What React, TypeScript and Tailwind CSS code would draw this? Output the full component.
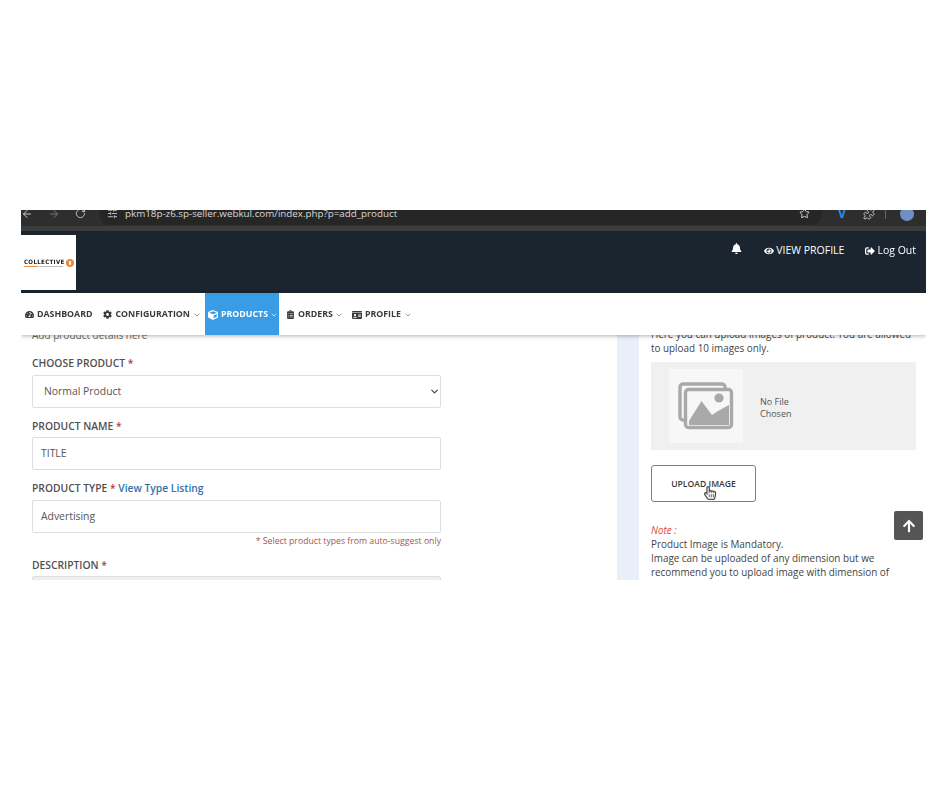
import { ChevronDown, ArrowLeft, ArrowRight, RotateCw, SlidersHorizontal, Star, Puzzle } from 'lucide-react';
import { FaTachometerAlt, FaCog, FaBell, FaEye, FaSignOutAlt, FaClipboardList, FaIdCard, FaRegHandPointer, FaArrowUp, FaCube } from 'react-icons/fa';

function Logo() {
    return (
        <div className="w-[55px] h-[55px] bg-white flex items-center justify-center shrink-0 pt-[1px]">
            <div className="flex items-center gap-[1px]">
                <div className="flex flex-col">
                    <span className="text-[6px] leading-[6px] font-black tracking-[0.35px] text-[#222] font-['DejaVu_Sans',sans-serif] scale-x-[0.92] origin-left w-[41px] whitespace-nowrap">COLLECTIVE</span>
                    <div className="flex items-center gap-[1px] mt-[1px]">
                        <div className="w-[14px] h-[1px] bg-[#f08a3c]" />
                        <div className="w-[24px] h-[1px] bg-[#bbbbbb]" />
                    </div>
                </div>
                <div className="w-[8px] h-[8px] rounded-full bg-[#ee8a3a] flex items-center justify-center">
                    <div className="w-[2px] h-[4px] rounded-full bg-white" />
                </div>
            </div>
        </div>
    );
}

function PictureIcon() {
    return (
        <svg width="56" height="48" viewBox="0 0 56 48" fill="none">
            <path d="M7 38 H5 a3 3 0 0 1-3-3 V5 a3 3 0 0 1 3-3 H44 a3 3 0 0 1 3 3 v2" stroke="#a9a9a9" strokeWidth="3.4" />
            <rect x="7.5" y="7.5" width="46" height="38" rx="3" stroke="#a9a9a9" strokeWidth="3.4" />
            <circle cx="41" cy="16" r="4.6" fill="#a9a9a9" />
            <path d="M11 43 V39 L23.5 19 L34 33 L40 29 L51 23 V43 Z" fill="#a9a9a9" />
        </svg>
    );
}

export default function App() {
    return (
        <div className="w-[940px] h-[788px] bg-white pt-[210px] pl-[21px] font-['Open_Sans',sans-serif] overflow-hidden">
            <div className="relative w-[905px] h-[370px] overflow-hidden flex flex-col blur-[0.4px]">
                {/* Browser chrome, top of it is cropped off */}
                <div className="h-[21px] shrink-0 bg-[#3c3c3c] overflow-hidden">
                    <div className="h-[16px] bg-[#2e2e2e] flex items-start text-[#c8c8c8]">
                        <div className="h-[23px] -mt-[8px] flex items-center gap-[15px] w-[78px]">
                            <ArrowLeft size={12} />
                            <ArrowRight size={12} className="text-[#777]" />
                            <RotateCw size={11} />
                        </div>
                        <div className="w-[723px] h-[23px] bg-[#262626] rounded-[12px] flex items-center pl-[8px] gap-[7px] -mt-[8px]">
                            <SlidersHorizontal size={11} />
                            <span className="text-[9.8px] pt-[1px] text-[#d8d8d8] whitespace-nowrap">pkm18p-z6.sp-seller.webkul.com/index.php?p=add_product</span>
                            <Star size={11} className="ml-auto mr-[12px] text-[#ddd]" />
                        </div>
                        <div className="h-[23px] -mt-[8px] flex items-center pl-[16px] gap-[17px] grow">
                            <span className="text-[#2f8fe0] text-[12px] font-bold leading-none">V</span>
                            <Puzzle size={12} />
                            <div className="w-[1px] h-[10px] bg-[#666] -ml-[7px]" />
                            <div className="w-[14px] h-[14px] rounded-full bg-[#6f8fc4] -ml-[3px]" />
                        </div>
                    </div>
                </div>

                {/* Dark header */}
                <div className="h-[62px] shrink-0 bg-[#1a2530] flex items-start justify-between pt-[4px]">
                    <Logo />
                    <div className="flex items-center text-white text-[10.5px] pr-[10px] pt-[8px]">
                        <FaBell size={11} className="mr-[22px] -mt-[4px]" />
                        <FaEye size={10} className="mr-[2px]" />
                        <span className="mr-[21px]">VIEW PROFILE</span>
                        <FaSignOutAlt size={10} className="mr-[2px]" />
                        <span>Log Out</span>
                    </div>
                </div>

                {/* Main nav */}
                <div className="relative z-10 h-[42px] shrink-0 bg-white shadow-[0_1px_4px_rgba(0,0,0,0.3)] flex items-stretch text-[8.8px] font-bold text-[#3a3a3a]">
                    <div className="flex items-center pl-[4px] pt-[1px] w-[184px]">
                        <FaTachometerAlt size={9} className="mr-[3px]" />
                        <span className="mr-[11px]">DASHBOARD</span>
                        <FaCog size={9} className="mr-[3px]" />
                        <span className="mr-[3px]">CONFIGURATION</span>
                        <ChevronDown size={8} className="text-[#666]" />
                    </div>
                    <div className="w-[74px] bg-[#3a9ce4] text-white flex items-center pl-[3px] pt-[1px] gap-[3px]">
                        <FaCube size={10} />
                        <span className="-mr-[1px]">PRODUCTS</span>
                        <ChevronDown size={8} />
                    </div>
                    <div className="flex items-center pl-[7px] pt-[1px]">
                        <FaClipboardList size={9} className="mr-[3px]" />
                        <span className="mr-[2px]">ORDERS</span>
                        <ChevronDown size={8} className="text-[#666]" />
                    </div>
                    <div className="flex items-center pl-[9px] pt-[1px] gap-[3px]">
                        <FaIdCard size={10} />
                        <span>PROFILE</span>
                        <ChevronDown size={8} className="text-[#666]" />
                    </div>
                </div>

                {/* Page body */}
                <div className="flex grow min-h-0 overflow-hidden">
                    <div className="w-[596px] shrink-0 bg-white pl-[11px] -mt-[7px] text-[#505050]">
                        <p className="text-[10px] leading-[14px] text-[#666]">Add product details here</p>
                        <label className="block mt-[14px] text-[10.3px] leading-[14px] font-semibold">CHOOSE PRODUCT <span className="text-[#b0413e]">*</span></label>
                        <div className="mt-[5px] w-[409px] h-[33px] border border-[#dedede] rounded-[2px] flex items-center justify-between pl-[11px] pr-0 text-[10.4px] text-[#555]">
                            <span>Normal Product</span>
                            <ChevronDown size={11} strokeWidth={2.5} className="text-[#444]" />
                        </div>
                        <label className="block mt-[11px] text-[10.3px] leading-[14px] font-semibold">PRODUCT NAME <span className="text-[#b0413e]">*</span></label>
                        <div className="mt-[4px] w-[409px] h-[33px] border border-[#dedede] rounded-[2px] flex items-center pl-[8px] text-[10.4px] text-[#555]">TITLE</div>
                        <label className="block mt-[11px] text-[10.3px] leading-[14px] font-semibold">PRODUCT TYPE <span className="text-[#b0413e]">*</span> <span className="text-[#2f72ab]">View Type Listing</span></label>
                        <div className="mt-[5px] w-[409px] h-[33px] border border-[#dedede] rounded-[2px] flex items-center pl-[8px] text-[10.4px] text-[#555]">Advertising</div>
                        <p className="w-[409px] mt-[2px] text-right text-[8.7px] leading-[12px] text-[#a5564f]">* Select product types from auto-suggest only</p>
                        <label className="block mt-[11px] text-[10.3px] leading-[14px] font-semibold">DESCRIPTION <span className="text-[#b0413e]">*</span></label>
                        <div className="mt-[4px] w-[409px] h-[33px] border border-[#dedede] rounded-[2px] bg-[#eeeeee]" />
                    </div>

                    <div className="w-[22px] bg-[#e9eff8] shrink-0" />

                    <div className="grow bg-white pl-[12px] pr-[10px] -mt-[8px] text-[9.9px] leading-[14px] text-[#444]">
                        <p className="w-[265px]">Here you can upload images of product. You are allowed to upload 10 images only.</p>
                        <div className="mt-[7px] w-[265px] h-[88px] bg-[#f0f0f0] flex items-center">
                            <div className="ml-[18px] w-[74px] h-[74px] bg-[#f7f7f7] flex items-center justify-center">
                                <PictureIcon />
                            </div>
                            <p className="ml-[17px] mt-[4px] w-[50px] text-[9px] leading-[12px] text-[#555]">No File Chosen</p>
                        </div>
                        <div className="relative mt-[15px] w-[105px] h-[37px] border border-[#808080] rounded-[3px] flex items-center justify-center text-[8.6px] font-semibold text-[#3a3a3a]">
                            UPLOAD IMAGE
                            <FaRegHandPointer size={14} className="absolute left-[51px] top-[20px] text-[#555]" />
                        </div>
                        <p className="mt-[22px] leading-[13px] italic text-[#e0483e]">Note :</p>
                        <p className="w-[270px]">Product Image is Mandatory.</p>
                        <p className="w-[270px]">Image can be uploaded of any dimension but we recommend you to upload image with dimension of</p>
                    </div>
                </div>

                {/* Scroll to top */}
                <div className="absolute left-[873px] top-[301px] w-[29px] h-[29px] rounded-[2px] bg-[#555555] flex items-center justify-center text-white">
                    <FaArrowUp size={14} />
                </div>
            </div>
        </div>
    );
}
